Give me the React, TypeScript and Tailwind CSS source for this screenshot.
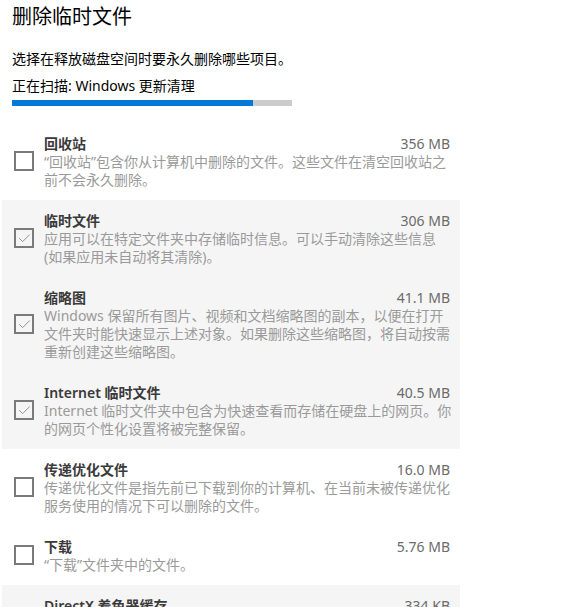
import { Check } from 'lucide-react';

type Item = {
  title: string;
  size: string;
  desc: string[];
  checked: boolean;
  shaded: boolean;
};

const items: Item[] = [
  {
    title: '回收站',
    size: '356 MB',
    desc: ['“回收站”包含你从计算机中删除的文件。这些文件在清空回收站之', '前不会永久删除。'],
    checked: false,
    shaded: false,
  },
  {
    title: '临时文件',
    size: '306 MB',
    desc: ['应用可以在特定文件夹中存储临时信息。可以手动清除这些信息', '(如果应用未自动将其清除)。'],
    checked: true,
    shaded: true,
  },
  {
    title: '缩略图',
    size: '41.1 MB',
    desc: [
      'Windows 保留所有图片、视频和文档缩略图的副本，以便在打开',
      '文件夹时能快速显示上述对象。如果删除这些缩略图，将自动按需',
      '重新创建这些缩略图。',
    ],
    checked: true,
    shaded: true,
  },
  {
    title: 'Internet 临时文件',
    size: '40.5 MB',
    desc: ['Internet 临时文件夹中包含为快速查看而存储在硬盘上的网页。你', '的网页个性化设置将被完整保留。'],
    checked: true,
    shaded: true,
  },
  {
    title: '传递优化文件',
    size: '16.0 MB',
    desc: ['传递优化文件是指先前已下载到你的计算机、在当前未被传递优化', '服务使用的情况下可以删除的文件。'],
    checked: false,
    shaded: false,
  },
  {
    title: '下载',
    size: '5.76 MB',
    desc: ['“下载”文件夹中的文件。'],
    checked: false,
    shaded: false,
  },
  {
    title: 'DirectX 着色器缓存',
    size: '334 KB',
    desc: ['清理由图形系统创建的文件，这些文件可以加快应用程序加载时间', '并提高响应能力。'],
    checked: false,
    shaded: true,
  },
];

const Row = ({ item }: { item: Item }) => (
  <div className={`flex items-center pl-3 pr-[10px] pt-[10px] pb-[11px] ${item.shaded ? 'bg-[#f5f5f5]' : ''}`}>
    <div className="w-5 h-5 border-2 border-[#7a7a7a] flex items-center justify-center shrink-0">
      {item.checked && <Check size={15} strokeWidth={1.2} className="text-[#6f6f6f]" />}
    </div>
    <div className="ml-[10px] flex-1 min-w-0">
      <div className="flex justify-between items-center h-5 text-[14px]">
        <span className="font-semibold text-[#3a3a3a]">{item.title}</span>
        <span className="text-[#6b6b6b]">{item.size}</span>
      </div>
      <div className="text-[14px] leading-[18px] text-[#9a9a9a] whitespace-nowrap">
        {item.desc.map((line) => (
          <div key={line}>{line}</div>
        ))}
      </div>
    </div>
  </div>
);

const App = () => {
  return (
    <div
      className="w-[581px] h-[607px] overflow-hidden bg-white"
      style={{ fontFamily: '"Noto Sans", "Noto Sans CJK SC", sans-serif' }}
    >
      <div className="px-3">
        <h1 className="text-[20px] leading-7 pt-[3px] text-black">删除临时文件</h1>
        <p className="text-[14px] leading-5 mt-[18px] text-black">选择在释放磁盘空间时要永久删除哪些项目。</p>
        <p className="text-[14px] leading-5 mt-[7px] text-black">正在扫描: Windows 更新清理</p>
        <div className="w-[280px] h-[6px] bg-[#cccccc] mt-[4px] flex">
          <div className="w-[241px] h-full bg-[#0078d7]" />
        </div>
      </div>
      <div className="ml-[2px] w-[458px] mt-[17px]">
        {items.map((item) => (
          <Row key={item.title} item={item} />
        ))}
      </div>
    </div>
  );
};

export default App;
